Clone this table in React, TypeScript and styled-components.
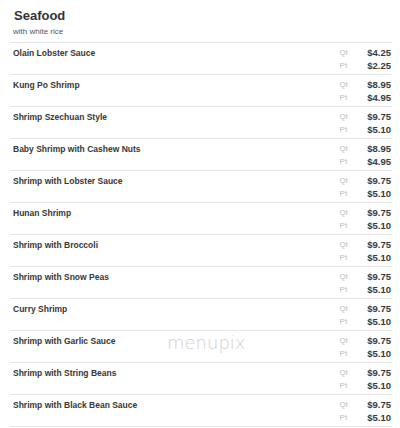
import React from "react";
import styled, { createGlobalStyle } from "styled-components";

const Global = createGlobalStyle`
  html, body { margin: 0; padding: 0; background: #fff; }
  body { font-family: "Liberation Sans", Arial, sans-serif; }
`;

const Page = styled.div`
  position: relative;
  width: 400px;
  height: 428px;
  overflow: hidden;
  background: #fff;
`;

const Header = styled.div`
  padding: 7px 0 5px 14px;
`;

const Title = styled.h2`
  margin: 0;
  font-size: 13px;
  line-height: 17px;
  font-weight: bold;
  color: #333;
`;

const Subtitle = styled.div`
  font-size: 8px;
  line-height: 10px;
  color: #555;
  margin-top: 3px;
  margin-left: -1px;
`;

const List = styled.div`
  margin: 0 8px 0 10px;
`;

const Row = styled.div`
  display: flex;
  justify-content: space-between;
  align-items: flex-start;
  height: 27px;
  border-top: 1px solid #e6e6e6;
  padding: 4px 1px 0 3px;
  box-sizing: content-box;
  &:last-child {
    border-bottom: 1px solid #e6e6e6;
  }
`;

const Name = styled.div`
  font-size: 8.5px;
  line-height: 13px;
  font-weight: bold;
  color: #363636;
`;

const Prices = styled.div`
  display: grid;
  grid-template-columns: auto 26px;
  column-gap: 17px;
  align-items: center;
`;

const Label = styled.span`
  font-size: 8px;
  line-height: 12.5px;
  color: #bdbdbd;
`;

const Price = styled.span`
  font-size: 9.5px;
  line-height: 12.5px;
  font-weight: bold;
  color: #3a3a3a;
  text-align: right;
`;

const Watermark = styled.div`
  position: absolute;
  left: 167px;
  top: 332px;
  font-family: "DejaVu Sans", sans-serif;
  font-weight: 200;
  font-size: 18px;
  line-height: 21px;
  color: #d0d0d0;
  pointer-events: none;
`;

const items: [string, string, string][] = [
  ["Olain Lobster Sauce", "$4.25", "$2.25"],
  ["Kung Po Shrimp", "$8.95", "$4.95"],
  ["Shrimp Szechuan Style", "$9.75", "$5.10"],
  ["Baby Shrimp with Cashew Nuts", "$8.95", "$4.95"],
  ["Shrimp with Lobster Sauce", "$9.75", "$5.10"],
  ["Hunan Shrimp", "$9.75", "$5.10"],
  ["Shrimp with Broccoli", "$9.75", "$5.10"],
  ["Shrimp with Snow Peas", "$9.75", "$5.10"],
  ["Curry Shrimp", "$9.75", "$5.10"],
  ["Shrimp with Garlic Sauce", "$9.75", "$5.10"],
  ["Shrimp with String Beans", "$9.75", "$5.10"],
  ["Shrimp with Black Bean Sauce", "$9.75", "$5.10"],
];

export default function App() {
  return (
    <Page>
      <Global />
      <Header>
        <Title>Seafood</Title>
        <Subtitle>with white rice</Subtitle>
      </Header>
      <List>
        {items.map(([name, qt, pt]) => (
          <Row key={name}>
            <Name>{name}</Name>
            <Prices>
              <Label>Qt</Label>
              <Price>{qt}</Price>
              <Label>Pt</Label>
              <Price>{pt}</Price>
            </Prices>
          </Row>
        ))}
      </List>
      <Watermark>menupix</Watermark>
    </Page>
  );
}
